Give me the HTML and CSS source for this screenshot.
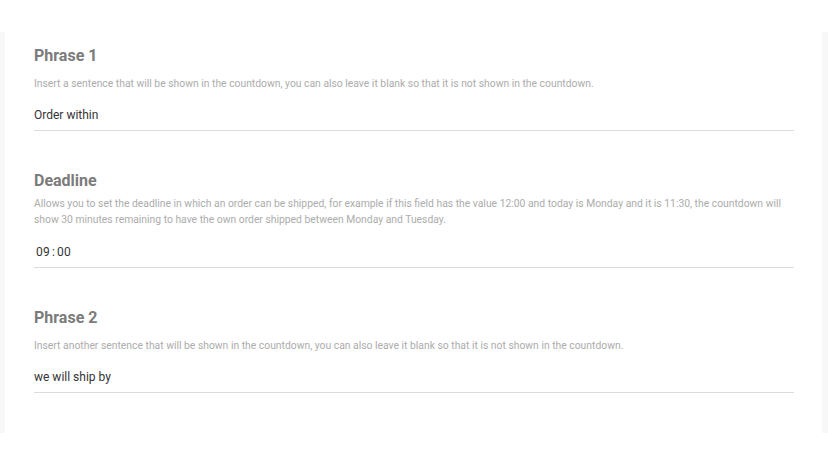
FILE: index.html
```html
<!DOCTYPE html>
<html>
<head>
    <title>Countdown settings</title>
    <link rel="stylesheet" href="styles.css">
</head>
<body>
    <main class="settings-wrap">
        <section class="settings-card">
            <div class="field">
                <h3 class="field-title">Phrase 1</h3>
                <p class="field-help">Insert a sentence that will be shown in the countdown, you can also leave it blank so that it is not shown in the countdown.</p>
                <input class="field-input" type="text" value="Order within">
            </div>
            <div class="field">
                <h3 class="field-title">Deadline</h3>
                <p class="field-help field-help--tight">Allows you to set the deadline in which an order can be shipped, for example if this field has the value 12:00 and today is Monday and it is 11:30, the countdown will show 30 minutes remaining to have the own order shipped between Monday and Tuesday.</p>
                <div class="field-input time-input">
                    <span>09</span><span class="time-sep">:</span><span>00</span>
                </div>
            </div>
            <div class="field">
                <h3 class="field-title">Phrase 2</h3>
                <p class="field-help">Insert another sentence that will be shown in the countdown, you can also leave it blank so that it is not shown in the countdown.</p>
                <input class="field-input" type="text" value="we will ship by">
            </div>
        </section>
    </main>
</body>
</html>
```

FILE: styles.css
```css
body {
    margin: 0;
    background-color: #ffffff;
    font-family: Roboto, "Liberation Sans", sans-serif;
}
.settings-wrap {
    margin-top: 32px;
    padding: 0 6px 0 5px;
    background-color: #f8f8f8;
}
.settings-card {
    background-color: #ffffff;
    padding: 14px 28px 40px 29px;
}
.field {
    margin-bottom: 40px;
}
.field:last-child {
    margin-bottom: 0;
}
.field-title {
    margin: 0;
    font-size: 16px;
    line-height: 20px;
    font-weight: 700;
    color: #7b7b7b;
}
.field-help {
    margin: 10px 0 7px;
    font-size: 10.35px;
    line-height: 16px;
    color: #acacac;
}
.field-help--tight {
    margin-top: 5px;
    margin-bottom: 8px;
}
.field-input {
    display: block;
    box-sizing: border-box;
    width: 100%;
    height: 32px;
    padding: 0;
    border: none;
    border-bottom: 1px solid #dcdcdc;
    font-family: Roboto, "Liberation Sans", sans-serif;
    font-size: 12px;
    color: #333333;
    background: transparent;
    outline: none;
}
.time-input {
    display: flex;
    align-items: center;
    padding-left: 2px;
    letter-spacing: 0.2px;
}
.time-sep {
    margin: 0 2px;
}
```
